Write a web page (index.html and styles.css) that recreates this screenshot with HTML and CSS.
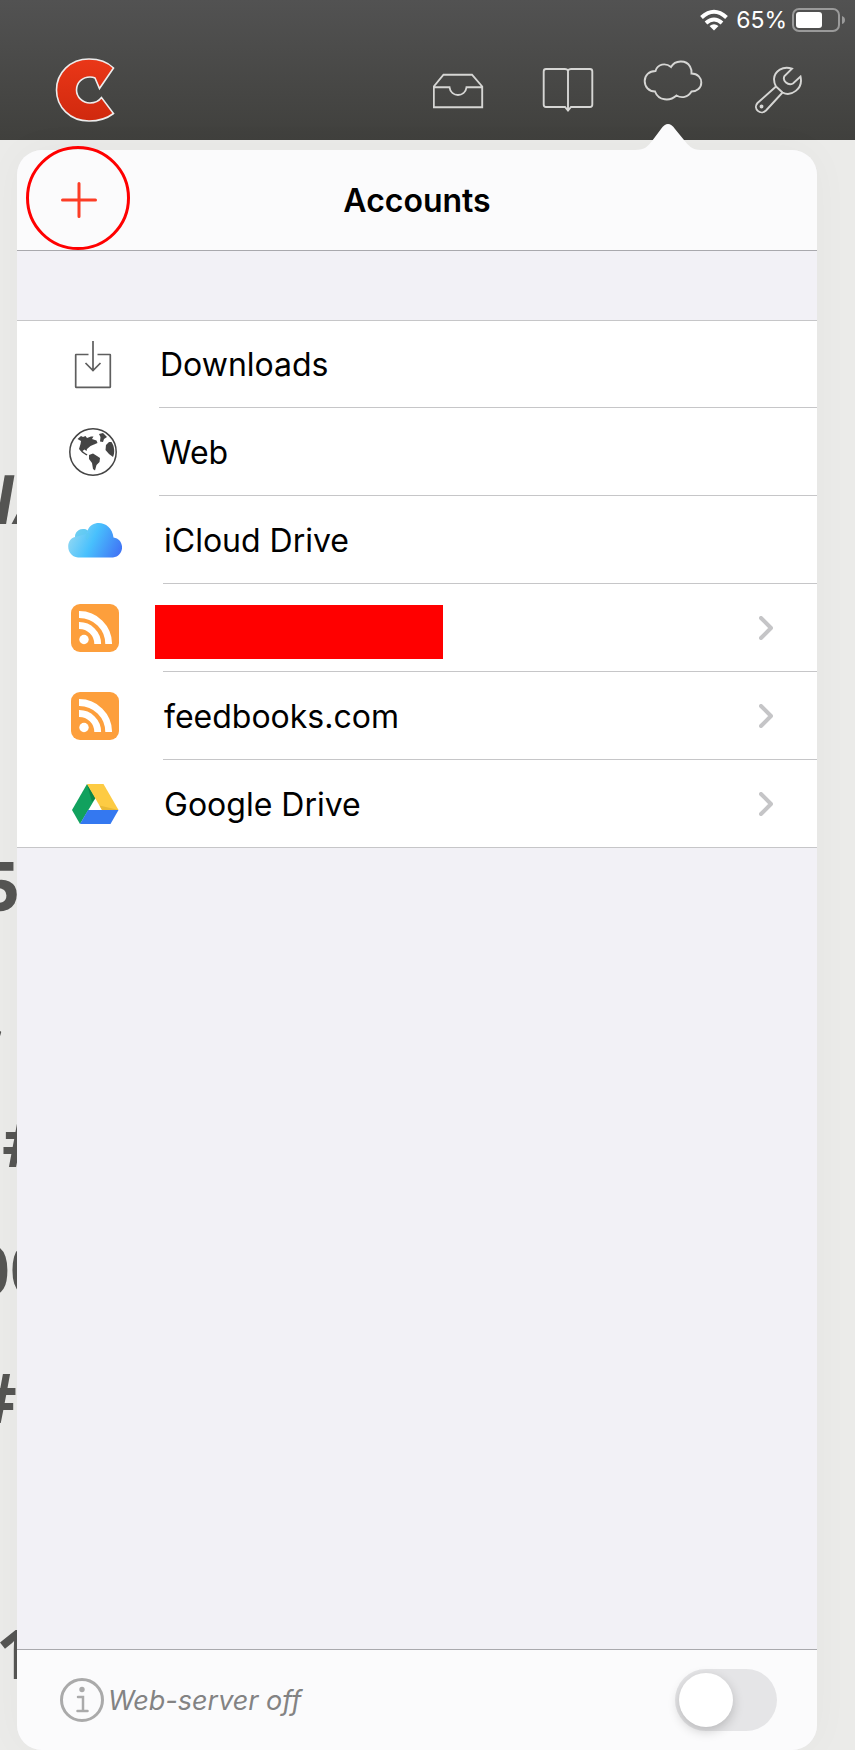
FILE: index.html
```html
<!DOCTYPE html>
<html lang="en">
<head>
<meta charset="utf-8">
<meta name="viewport" content="width=device-width, initial-scale=1">
<title>Accounts</title>
<link rel="stylesheet" href="styles.css">
</head>
<body>
<div class="screen">
  <header class="header">
    <div class="status">
      <svg class="wifi" viewBox="700 8 28 24" aria-hidden="true">
        <g fill="none" stroke="#fff" stroke-width="4"><path d="M701.5 17.5Q714 6 726.500 17.500"/><path d="M706 23Q714 16 722 23"/></g>
        <path d="M709.500 26Q714 22.500 718.500 26L714 30.500Z" fill="#fff"/>
      </svg>
      <span class="percent">65%</span>
      <svg class="battery" viewBox="792 8 54 24" aria-hidden="true">
        <rect x="793" y="9" width="46" height="22" rx="6" fill="none" stroke="#9a9a9a" stroke-width="2"/>
        <rect x="796" y="12" width="26" height="16" rx="3" fill="#fff"/>
        <path d="M842 16Q845 17 845 20T842 24Z" fill="#9a9a9a"/>
      </svg>
    </div>
    <nav class="toolbar">
      <button class="tool logo" aria-label="Home">
        <svg viewBox="55 58 60 64">
          <defs><linearGradient id="red" x1="0" y1="0" x2="0" y2="1"><stop offset="0" stop-color="#ea3718"/><stop offset="1" stop-color="#d0290e"/></linearGradient></defs>
          <path d="M113.500 68C107 61.500 98 59 89 59C70 59 56.500 73 56.500 90C56.500 107 70 121 89 121C98 121 107 118.500 113.500 113.500L101.500 97.500C98.500 101.500 94.500 103 90 103C82.500 103 76.500 97 76.500 90C76.500 82.500 82.500 77 90 77Q93 77 95 78L99.500 88.500Z" fill="url(#red)" stroke="#ededed" stroke-width="1.600"/>
        </svg>
      </button>
      <button class="tool" aria-label="Inbox">
        <svg viewBox="433 60 60 60"><path d="M433.800 86.500L443.500 74.700H472L482.200 86.500V107.200H433.800ZM434 87.300H449.500C451 97.500 465 97.500 466.500 87.300H482"/></svg>
      </button>
      <button class="tool" aria-label="Library">
        <svg viewBox="538 60 60 60"><path d="M568 70.500Q567 69 565 69H546Q543.700 69 543.700 71.500V104.500Q543.700 107 546 107H565L568 110.500L571 107H590Q592.300 107 592.300 104.500V71.500Q592.300 69 590 69H571Q569 69 568 70.500V109"/></svg>
      </button>
      <button class="tool" aria-label="Cloud">
        <svg viewBox="643 60 60 60"><path d="M655.500 71C657.500 64 665.500 62.500 671 67C675 60 686 59.500 690 66.500Q692 70 691.500 73.500C698 73.500 701.300 78 701.300 82.500C701.300 88 697 91.500 691.500 91.500C688 97.500 681.500 98.500 676.500 95.500C670 101.500 658.500 101 655 91.500C649 91.500 644.700 87 644.700 81C644.700 75.500 649 71 655.500 71Z"/></svg>
      </button>
      <button class="tool" aria-label="Settings">
        <svg viewBox="748 60 60 60"><path d="M792 68.700C783 65.500 774.500 71 774 79Q774 83 776 86.500L757.500 103C752.500 108.500 760.500 116 766 110.500L782.500 92.500C791 97 803.500 89 800.500 76.500L793 83.500C788 86 782 81 784.500 76ZM776 86.500L782.500 92.500"/><circle cx="761.500" cy="106.500" r="1"/></svg>
      </button>
    </nav>
  </header>

  <main class="stage">
    <div class="page" aria-hidden="true">
      <span class="frag frag-a">IA</span>
      <span class="frag frag-b">5</span>
      <span class="frag frag-c">,</span>
      <span class="frag frag-d">#</span>
      <span class="frag frag-e">00</span>
      <span class="frag frag-f">#</span>
      <span class="frag frag-g">1</span>
    </div>

    <section class="panel">
      <svg class="arrow" viewBox="0 0 66 27" aria-hidden="true"><path d="M0 27V26C10 26 13 22 17 17L26 5Q33 -5 40 5L49 16C53 21 57 26 66 26V27Z" fill="#fbfbfc"/></svg>
      <div class="titlebar">
        <button class="add" aria-label="Add account">
          <svg viewBox="0 0 36 36"><path d="M18 1.500V34.500M1.500 18H34.500"/></svg>
        </button>
        <h1 class="title">Accounts</h1>
      </div>

      <ul class="list">
        <li><a class="row" href="#downloads">
          <span class="icon"><svg width="48" height="48" viewBox="0 1 48 48" fill="none" stroke="#5e5e5e" stroke-width="1.700"><path d="M19.500 14.500H7Q6.700 14.500 6.700 15V47Q6.700 47.300 7 47.300H41Q41.300 47.300 41.300 47V15Q41.300 14.500 41 14.500H28.500M24 .5V30.500M16.500 23L24 30.500L31.500 23"/></svg></span>
          <span class="body"><span class="name">Downloads</span></span></a></li>
        <li><a class="row" href="#web">
          <span class="icon"><svg width="48" height="48" viewBox="0 0 48 48"><circle cx="24" cy="24" r="23.200" fill="#fff" stroke="#444" stroke-width="1.500"/><g fill="#444"><path d="M8.500 11L12 8L14 9L16.500 8L18 10L22 8.500H24.500L23 11L27.500 12.500L28.500 15L25 16.500L21.500 18L18 21L17.500 23L15.500 21.500L13.500 23L16 25L18.500 26.500L17.500 27.500L13 24.500L10 21L11.500 16L12 13Z"/><path d="M20 27L24 25.500L28 28L31 30L30.500 34L27.500 37L26 42.500L24 41L23 35L20 31Z"/><path d="M30 6L34 5L38 9L35 11L34 14L31 13.500L31.500 9Z"/><path d="M42.500 14C45.500 18 46 25 44 29L40 26L36.500 22L37 17L40 14Z"/></g></svg></span>
          <span class="body"><span class="name">Web</span></span></a></li>
        <li><a class="row row-account" href="#icloud">
          <span class="icon"><svg width="54" height="48" viewBox="0 0 54 48"><defs><linearGradient id="cloud" x1="0" y1=".4" x2="1" y2=".7"><stop offset="0" stop-color="#91d8f3"/><stop offset=".45" stop-color="#48c0fd"/><stop offset="1" stop-color="#4176f5"/></linearGradient></defs><path d="M10 41.500C-2.500 40 -2.500 23 7 21C7 14.500 14.500 11 19.500 14.500C25 2 44 6 45.500 21.500C57 23 57 40 45 41.500Z" fill="url(#cloud)"/><path d="M7 21C7 14.500 14.500 11 19.500 14.500Q16.500 19 18.500 24Q23 21 21 17" fill="#5bc9ee" opacity=".5"/></svg></span>
          <span class="body"><span class="name">iCloud Drive</span></span></a></li>
        <li><a class="row row-account" href="#catalog" aria-label="Private catalog">
          <span class="icon"><svg width="48" height="48" viewBox="0 0 48 48"><rect width="48" height="48" rx="9" fill="#fd9f3c"/><circle cx="13" cy="35.500" r="4.700" fill="#fff"/><path d="M8 21.500A18.500 18.500 0 0 1 26.700 40M8 10.500A29.500 29.500 0 0 1 37.700 40" fill="none" stroke="#fff" stroke-width="6.800"/></svg></span>
          <span class="body"><span class="redacted"></span><svg class="chevron" viewBox="0 0 14 24"><path d="M2 2L12 12L2 22"/></svg></span></a></li>
        <li><a class="row row-account" href="#feedbooks">
          <span class="icon"><svg width="48" height="48" viewBox="0 0 48 48"><rect width="48" height="48" rx="9" fill="#fd9f3c"/><circle cx="13" cy="35.500" r="4.700" fill="#fff"/><path d="M8 21.500A18.500 18.500 0 0 1 26.700 40M8 10.500A29.500 29.500 0 0 1 37.700 40" fill="none" stroke="#fff" stroke-width="6.800"/></svg></span>
          <span class="body"><span class="name">feedbooks.com</span><svg class="chevron" viewBox="0 0 14 24"><path d="M2 2L12 12L2 22"/></svg></span></a></li>
        <li><a class="row row-account" href="#gdrive">
          <span class="icon"><svg width="48" height="48" viewBox="0 0 48 48"><path d="M16 4L24.500 18L9 44L1 30Z" fill="#11a15e"/><path d="M16 4L24.500 18L21 22Z" fill="#0a8549"/><path d="M16 4H32.500L47.500 30H31Z" fill="#fdcb43"/><path d="M31 30L28.500 25.500L47.500 30Z" fill="#e9b936"/><path d="M17 30H47.500L39.500 44H9Z" fill="#3478f0"/></svg></span>
          <span class="body"><span class="name">Google Drive</span><svg class="chevron" viewBox="0 0 14 24"><path d="M2 2L12 12L2 22"/></svg></span></a></li>
      </ul>

      <footer class="footer">
        <svg class="info" viewBox="0 0 44 44" aria-hidden="true"><circle cx="22" cy="22" r="20.500" fill="none" stroke="#aaa" stroke-width="3"/><circle cx="22" cy="11.500" r="2.700" fill="#aaa"/><path d="M18 19H23V33M17.500 33H27.500" fill="none" stroke="#aaa" stroke-width="2.500" stroke-linecap="round"/></svg>
        <label class="server" for="server">Web-server off</label>
        <input class="switch" id="server" type="checkbox" role="switch">
      </footer>
    </section>
  </main>
</div>
</body>
</html>
```
FILE: styles.css
```css
*, *::before, *::after { box-sizing: border-box; }

body {
  margin: 0;
  background: #ebebe9;
  color: #000;
  font-family: Inter, "Liberation Sans", sans-serif;
}

button {
  padding: 0;
  border: 0;
  background: none;
}

svg { display: block; flex: none; }

.screen {
  display: flex;
  flex-direction: column;
  min-height: 100vh;
}

.header {
  height: 140px;
  background: linear-gradient(#525252, #40403d);
}

.status {
  display: flex;
  align-items: center;
  justify-content: flex-end;
  height: 40px;
  padding-right: 9px;
  color: #fff;
  font-size: 23px;
}

.wifi { width: 28px; height: 24px; margin-right: 8px; }
.battery { width: 54px; height: 24px; margin-left: 5px; }

.toolbar {
  display: flex;
  align-items: center;
  gap: 45px;
  height: 100px;
  padding: 0 47px 0 55px;
}

.tool svg {
  width: 60px;
  height: 60px;
  fill: none;
  stroke: #d6d6d4;
  stroke-width: 1.9;
}

.logo { margin-right: auto; }
.tool.logo svg { height: 64px; }

.stage {
  display: grid;
  grid-template-columns: 17px 1fr 38px;
  flex: 1;
}

/* The open comic's lettering, on a regular line grid, showing beside the panel. */
.page {
  display: flex;
  flex-direction: column;
  overflow: hidden;
  padding-top: 297px;
  color: #555553;
  font: bold 68px/128px "Noto Sans", sans-serif;
  white-space: nowrap;
}

.frag { flex: none; }
.frag-a { text-indent: -5px; font-family: Roboto, sans-serif; font-style: italic; }
.frag-b { margin-top: 256px; text-indent: -19px; }
.frag-c { text-indent: -14px; }
.frag-d { text-indent: 2px; }
.frag-e { text-indent: -29px; }
.frag-f { text-indent: -27px; }
.frag-g { margin-top: 128px; text-indent: -4px; }

.panel {
  position: relative;
  display: flex;
  flex-direction: column;
  margin-top: 10px;
  border-radius: 25px;
  background: #f2f1f6;
  box-shadow: 0 0 40px rgba(0, 0, 0, .03);
}

.arrow {
  position: absolute;
  top: -26px;
  right: 116px;
  width: 66px;
  height: 27px;
}

.titlebar {
  display: grid;
  grid-template-columns: 123px 1fr 123px;
  align-items: center;
  height: 101px;
  border-bottom: 1px solid #a9a9ad;
  border-radius: 25px 25px 0 0;
  background: #fbfbfc;
}

.title {
  margin: 0;
  font-size: 32px;
  font-weight: 600;
  text-align: center;
}

.add {
  position: relative;
  display: grid;
  place-items: center;
  height: 100px;
}

.add svg {
  width: 36px;
  height: 36px;
  fill: none;
  stroke: #fc3d26;
  stroke-width: 3;
  stroke-linecap: round;
}

.add::after {
  content: "";
  position: absolute;
  top: -4px;
  left: 9px;
  width: 104px;
  height: 104px;
  border: 3px solid #f00;
  border-radius: 50%;
}

.list {
  margin: 69px 0 0;
  padding: 0;
  border-top: 1px solid #c6c6c8;
  border-bottom: 1px solid #c6c6c8;
  background: #fff;
  list-style: none;
}

.row {
  display: flex;
  height: 88px;
  color: inherit;
  text-decoration: none;
}

li:first-child .row,
li:last-child .row { height: 87px; }

.icon {
  display: flex;
  align-items: center;
  justify-content: center;
  width: 142px;
  padding-left: 10px;
}

.row-account .icon { width: 146px; }

.body {
  position: relative;
  display: flex;
  align-items: center;
  flex: 1;
  padding: 1px 44px 0 1px;
  border-bottom: 1px solid #c6c6c8;
}

li:last-child .body { border-bottom: 0; }

.name { font-size: 32px; }

.redacted {
  position: absolute;
  top: 21px;
  left: -8px;
  width: 288px;
  height: 54px;
  background: #f00;
}

.chevron {
  width: 14px;
  height: 24px;
  margin-left: auto;
  fill: none;
  stroke: #c5c5c7;
  stroke-width: 4;
  stroke-linecap: round;
  stroke-linejoin: round;
}

.footer {
  display: flex;
  align-items: center;
  gap: 4px;
  height: 101px;
  margin-top: auto;
  padding: 0 40px 0 43px;
  border-top: 1px solid #a9a9ad;
  border-radius: 0 0 25px 25px;
  background: #fbfbfc;
}

.info { width: 44px; height: 44px; }

.server {
  color: #838383;
  font-size: 27px;
  font-style: italic;
}

.switch {
  appearance: none;
  width: 102px;
  height: 62px;
  margin: 0 0 0 auto;
  padding: 4px;
  border-radius: 31px;
  background: #e5e5e7;
}

.switch::before {
  content: "";
  display: block;
  width: 54px;
  height: 54px;
  border-radius: 50%;
  background: #fff;
  box-shadow: 0 4px 12px rgba(0, 0, 0, .2);
}

.switch:checked { background: #34c759; }
.switch:checked::before { margin-left: auto; }
```
